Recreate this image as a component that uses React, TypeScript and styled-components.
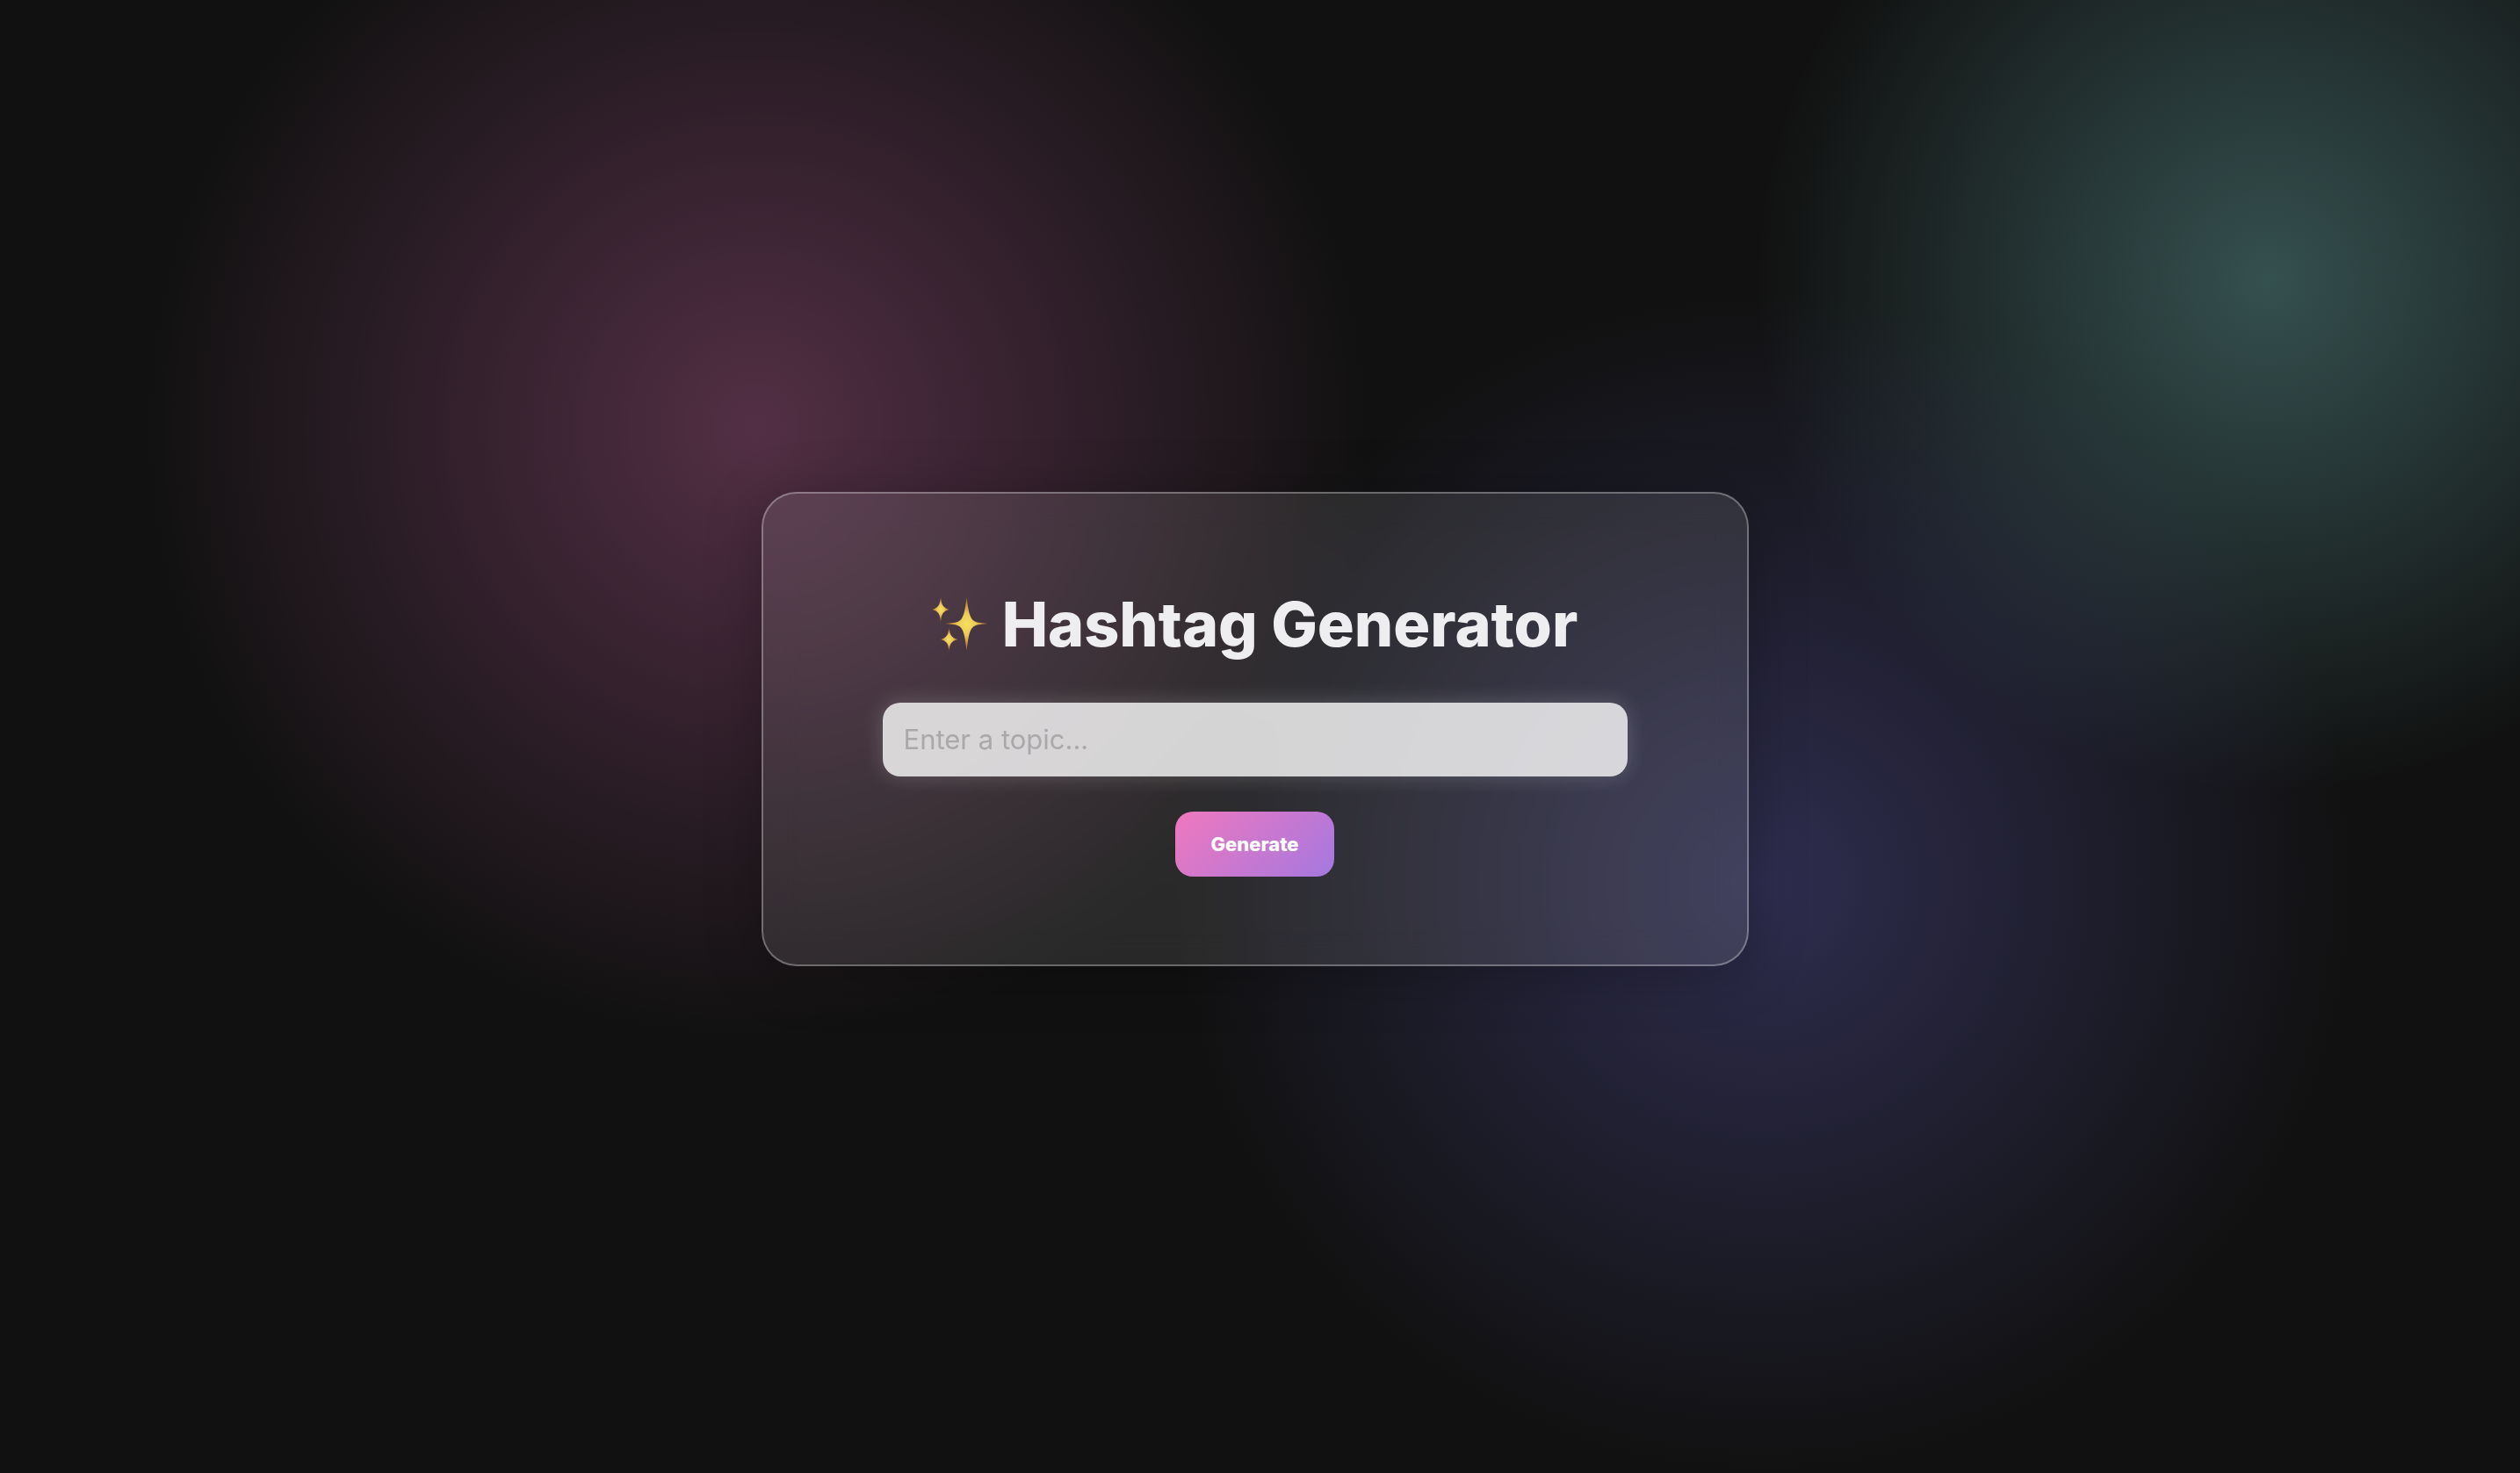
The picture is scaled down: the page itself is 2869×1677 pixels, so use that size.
import React, { useState } from "react";
import styled, { createGlobalStyle } from "styled-components";

const GlobalStyle = createGlobalStyle`
  * {
    box-sizing: border-box;
  }

  body {
    margin: 0;
    background: #111111;
    font-family: Inter, "Liberation Sans", sans-serif;
  }
`;

const Page = styled.main`
  display: flex;
  align-items: center;
  justify-content: center;
  min-height: 100vh;
  padding: 0 12px 18px 0;
  background:
    radial-gradient(circle at 30% 29%, rgba(255, 125, 205, 0.28), transparent 30%),
    radial-gradient(circle at 70% 60%, rgba(114, 110, 222, 0.3), transparent 30%),
    radial-gradient(circle at 90% 19%, rgba(134, 227, 223, 0.3), transparent 20%),
    #111111;
`;

const Card = styled.form`
  display: flex;
  flex-direction: column;
  align-items: center;
  gap: 40px;
  width: 1124px;
  max-width: 100%;
  padding: 100px 136px;
  border: 2px solid rgba(255, 255, 255, 0.3);
  border-radius: 40px;
  background: rgba(255, 255, 255, 0.1);
  box-shadow: 0 8px 64px rgba(0, 0, 0, 0.25);
  backdrop-filter: blur(20px);
`;

const Title = styled.h1`
  display: flex;
  align-items: center;
  gap: 16px;
  margin: 0;
  color: #eeedef;
  font-family: Inter, "Liberation Sans", sans-serif;
  font-size: 70px;
  font-weight: 800;
  line-height: 98px;
  white-space: nowrap;
`;

const SparklesIcon = styled.svg`
  flex: none;
  width: 64px;
  height: 64px;
`;

const TopicInput = styled.input`
  width: 100%;
  height: 84px;
  padding: 0 24px;
  border: 0;
  border-radius: 20px;
  outline: none;
  background: rgba(255, 255, 255, 0.8);
  box-shadow: 0 0 24px rgba(255, 255, 255, 0.2);
  color: #222222;
  font-family: inherit;
  font-size: 31px;

  &::placeholder {
    color: #a9a9a9;
    opacity: 1;
  }
`;

const GenerateButton = styled.button`
  height: 74px;
  padding: 0 40px;
  border: 0;
  border-radius: 20px;
  background: linear-gradient(135deg, #f078be, #a478e0);
  color: #ffffff;
  cursor: pointer;
  font-family: inherit;
  font-size: 22px;
  font-weight: 800;
`;

function Sparkles() {
  return (
    <SparklesIcon viewBox="0 0 64 64" aria-hidden="true">
      <defs>
        <radialGradient id="spark">
          <stop offset="0" stopColor="#f5e05f" />
          <stop offset="0.4" stopColor="#ecca58" />
          <stop offset="1" stopColor="#a8602f" />
        </radialGradient>
      </defs>
      <g fill="url(#spark)">
        <path d="M39.500 1C41.500 17 43 25 48 28C51 30 57 30.300 64 31C57 31.700 51 32 48 34C43 37 41.500 45 39.500 62C37.500 45 36 37 31 34C28 32 22 31.700 15 31C22 30.300 28 30 31 28C36 25 37.500 17 39.500 1Z" />
        <path d="M10 1C11 9 12 13 20 15C12 17 11 20 10 29C9 20 8 17 0 15C8 13 9 9 10 1Z" />
        <path d="M19.500 36C20.500 43 21.500 47 29.500 49C21.500 51 20.500 54 19.500 62C18.500 54 17.500 51 9.500 49C17.500 47 18.500 43 19.500 36Z" />
      </g>
    </SparklesIcon>
  );
}

export default function App() {
  const [topic, setTopic] = useState("");

  return (
    <>
      <GlobalStyle />
      <Page>
        <Card onSubmit={(event) => event.preventDefault()}>
          <Title>
            <Sparkles />
            Hashtag Generator
          </Title>
          <TopicInput
            type="text"
            aria-label="Topic"
            placeholder="Enter a topic..."
            value={topic}
            onChange={(event) => setTopic(event.target.value)}
          />
          <GenerateButton type="submit">Generate</GenerateButton>
        </Card>
      </Page>
    </>
  );
}
